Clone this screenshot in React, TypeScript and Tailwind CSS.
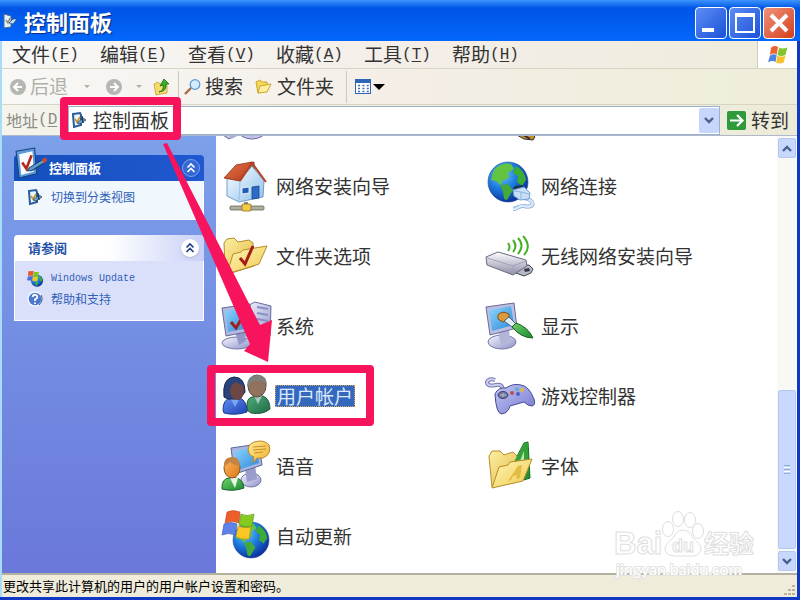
import type { ReactNode } from "react";

interface IconProps {
  children: ReactNode;
  className?: string;
  box?: string;
}

const Svg = ({ children, className = "size-12", box = "0 0 48 48" }: IconProps) => (
  <svg viewBox={box} className={`shrink-0 overflow-visible ${className}`} aria-hidden="true">
    {children}
  </svg>
);

const Gradient = ({ id, from, to, x2 = "1", y2 = "1" }: { id: string; from: string; to: string; x2?: string; y2?: string }) => (
  <linearGradient id={id} x1="0" y1="0" x2={x2} y2={y2}>
    <stop offset="0" stopColor={from} />
    <stop offset="1" stopColor={to} />
  </linearGradient>
);

// Gradients shared by all icons
const SharedDefs = () => (
  <svg className="absolute size-0" aria-hidden="true">
    <defs>
      <Gradient id="folder" from="#fff6b8" to="#f0c94e" />
      <Gradient id="folderBack" from="#fdf0a4" to="#e3b640" />
      <Gradient id="screen" from="#8fd8fb" to="#2b86dc" />
      <Gradient id="shell" from="#f4f4ff" to="#8f92c8" />
      <Gradient id="roof" from="#e8744a" to="#b33c1c" />
      <Gradient id="wall" from="#ffffff" to="#8cc0ec" />
      <Gradient id="blueShirt" from="#5f8cf2" to="#1c42b4" />
      <Gradient id="greenShirt" from="#4fae78" to="#1d6a44" />
      <Gradient id="greenBody" from="#6fd06c" to="#188a2c" />
      <Gradient id="orange" from="#ffb45c" to="#d97a18" />
      <Gradient id="bubble" from="#ffec94" to="#f0b02c" />
      <Gradient id="pad" from="#c4c8f8" to="#7478cc" />
      <Gradient id="device" from="#ffffff" to="#8c8ca8" x2="0" />
      <radialGradient id="globe" cx="0.35" cy="0.3" r="0.75">
        <stop offset="0" stopColor="#6cc8f8" />
        <stop offset="0.5" stopColor="#1c7ade" />
        <stop offset="1" stopColor="#0a2c98" />
      </radialGradient>
    </defs>
  </svg>
);

const WindowsFlag = ({ className = "size-12" }: { className?: string }) => (
  <Svg className={className} box="0 0 32 28">
    <path d="M5 2 Q11 -2 16 1 L14 13 Q9 10 3 14Z" fill="#ee6230" />
    <path d="M18 2 Q23 5 31 2 L28 14 Q21 17 15 14Z" fill="#82c430" />
    <path d="M3 15 Q9 11 14 14 L12 25 Q6 22 0 26Z" fill="#4e84e4" />
    <path d="M15 15 Q21 18 28 15 L25 26 Q19 29 13 26Z" fill="#fac02c" />
  </Svg>
);

const PanelIcon = ({ className }: { className: string }) => (
  <Svg className={className} box="0 0 32 32">
    <path d="M2 5 L20 2 L22 27 L5 31Z" fill="#5d9ad8" stroke="#174178" />
    <path d="M5 8 L18 5 L19 25 L7 28Z" fill="#f8fcff" />
    <path d="M8 16 L12 22 L17 9" fill="none" stroke="#b82418" strokeWidth="2.5" />
    <path d="M15 21 L28 13 L30 16 L17 24 L13 24Z" fill="#5e9cce" stroke="#1d3f6a" />
    <path d="M27 13 L31 11 L32 14 L29 17Z" fill="#d6472c" />
  </Svg>
);

const TaskIcon = ({ className }: { className: string }) => (
  <Svg className={className} box="0 0 16 16">
    <path d="M2 2 L9 1 L10 3 L10 13 L3 15Z" fill="#e8f4ff" stroke="#285c9c" strokeWidth="2" />
    <path d="M4 7 L6 10 L9 5" fill="none" stroke="#c89428" strokeWidth="1.5" />
    <path d="M6 11 L12 6 L15 8 L9 12Z" fill="#6ea6d4" stroke="#1c3450" strokeWidth="0.7" />
    <path d="M11 4 L12 11" stroke="#1c3450" strokeWidth="1.4" />
  </Svg>
);

const TitleIcon = () => (
  <Svg className="h-4 w-[14px]" box="0 0 14 16">
    <path d="M0 1 L7 3 L7 14 L0 15Z" fill="#e4f0fa" stroke="#4c6c94" />
    <path d="M2 7 L4 10 L6 5" fill="none" stroke="#8c8c6c" strokeWidth="1.4" />
    <path d="M5 10 L9 6 L13 6 L9 11Z" fill="#c4dcf0" stroke="#28507c" strokeWidth="0.7" />
  </Svg>
);

const HouseIcon = () => (
  <Svg>
    <path d="M28 1 L33 0 L34 12 L28 6Z" fill="#c2452c" stroke="#842818" strokeWidth="0.7" />
    <path d="M6 16 L20 17 L31 4 L43 19 L42 35 L18 40 L6 34Z" fill="url(#wall)" stroke="#5b86bc" strokeWidth="0.8" />
    <path d="M19 18 L18 40" stroke="#9cc2e6" />
    <path d="M3 16 L15 3 L31 0 L19 19Z" fill="url(#roof)" stroke="#8c2c18" strokeWidth="0.8" />
    <path d="M19 19 L31 1 L45 20" fill="none" stroke="#b34426" strokeWidth="2" />
    <path d="M21 26 L28 25 L28 31 L21 32Z" fill="#1c5cba" stroke="#fff" strokeWidth="0.8" />
    <path d="M31 25 L38 24 L38 36 L31 37Z" fill="#2c6cc6" stroke="#174790" strokeWidth="0.8" />
    <path d="M25 40 L25 45" stroke="#8c8c7c" strokeWidth="4" />
    <rect x="9" y="44" width="34" height="4" rx="1" fill="#b0b09c" stroke="#66665a" strokeWidth="0.8" />
    <rect x="21" y="42" width="9" height="7" rx="1" fill="#f3c94c" stroke="#8c6c1c" strokeWidth="0.8" />
  </Svg>
);

const Globe = ({ cx, cy, r }: { cx: number; cy: number; r: number }) => (
  <g transform={`translate(${cx} ${cy}) scale(${r / 20})`}>
    <circle r="20" fill="url(#globe)" stroke="#1b4898" strokeWidth="0.6" />
    <path d="M-14 -12 Q-6 -20 3 -18 L6 -13 L0 -9 L1 -4 L-5 -2 L-7 3 L-12 -1 L-17 -2Z" fill="#62c440" />
    <path d="M-8 3 L0 2 L5 8 L-1 18 L-4 17 L-5 10Z" fill="#44a83c" />
    <path d="M8 -16 Q17 -11 18 -2 L14 4 L9 0 L10 -6 L5 -9Z" fill="#3cac34" />
  </g>
);

const NetworkIcon = () => (
  <Svg>
    <Globe cx={22} cy={20} r={20} />
    <path d="M27 27 L29 24 L37 23 L38 26 L31 30Z" fill="#16324c" />
    <path d="M38 36 C50 38 49 47 38 44 C33 43 32 47 27 47" fill="none" stroke="#7fa4d0" strokeWidth="4" />
    <path d="M38 36 C50 38 49 47 38 44 C33 43 32 47 27 47" fill="none" stroke="#d8eafc" strokeWidth="2.6" />
    <path d="M27 28 L38 25 L44 31 L43 37 L34 38 L28 34Z" fill="#c7e0f8" stroke="#6f9ccc" />
    <path d="M28 29 L35 30 L43 32 M35 30 L35 37" fill="none" stroke="#8cb4dc" />
  </Svg>
);

const FolderCheckIcon = () => (
  <Svg>
    <path d="M3 11 L6 7 L13 6 L17 10 L28 8 L32 11 L33 34 L7 42 L4 36Z" fill="url(#folderBack)" stroke="#b48c28" />
    <path d="M12 22 L20 20 L22 18 L46 14 L38 32 L6 42Z" fill="url(#folder)" stroke="#b48c28" />
    <path d="M19 26 L24 32 L32 14" fill="none" stroke="#a41c14" strokeWidth="3" />
  </Svg>
);

const WirelessIcon = () => (
  <Svg>
    <g fill="none" stroke="#48b028" strokeWidth="2">
      <path d="M22 11 Q25 15 22 19" />
      <path d="M27 8 Q32 14 27 20" />
      <path d="M32 6 Q39 13 32 22" />
      <path d="M37 4 Q46 14 38 23" />
    </g>
    <path d="M31 34 L43 33 L47 37 L45 41 L38 44 L30 41Z" fill="#b7bac6" stroke="#424454" />
    <path d="M38 37 L43 36 L44 39 L39 40Z" fill="#343648" />
    <path d="M0 25 L12 20 L40 28 L41 34 L27 43 L1 33Z" fill="url(#device)" stroke="#6b6b80" />
    <path d="M1 26 L27 34 L40 29 M27 34 L27 42" fill="none" stroke="#a2a2b8" />
  </Svg>
);

const SystemIcon = () => (
  <Svg>
    <path d="M26 4 L34 0 L50 4 L49 34 L42 39 L25 34Z" fill="url(#shell)" stroke="#696ca0" />
    <path d="M36 5 L47 7 M36 11 L47 13 M36 17 L47 19" stroke="#8b90c4" strokeWidth="2" />
    <ellipse cx="16" cy="41" rx="15" ry="6" fill="url(#shell)" stroke="#7376a4" />
    <path d="M14 30 L24 30 L25 39 L18 43Z" fill="#9396c8" />
    <path d="M1 6 L29 2 L31 29 L5 34Z" fill="#b3b7de" stroke="#656a9e" />
    <path d="M4 9 L27 5 L28 26 L7 30Z" fill="url(#screen)" />
    <path d="M10 20 L15 26 L24 11" fill="none" stroke="#a02018" strokeWidth="3" />
  </Svg>
);

const DisplayIcon = () => (
  <Svg>
    <ellipse cx="16" cy="40" rx="14" ry="7" fill="url(#shell)" stroke="#7779a8" />
    <path d="M12 29 L23 26 L24 39 L15 43Z" fill="#b3b5d8" />
    <path d="M0 5 L28 1 L31 26 L4 33Z" fill="#bcbedf" stroke="#686b9b" />
    <path d="M3 8 L25 4 L28 23 L6 29Z" fill="url(#screen)" />
    <path d="M12 13 Q16 8 23 12 L23 17 L17 20 L12 17Z" fill="#dc9a3c" stroke="#845218" />
    <path d="M18 19 L23 15 L30 22 L26 25Z" fill="#e2ecf6" stroke="#4c6078" />
    <path d="M26 25 L30 21 Q42 25 47 36 Q35 36 26 25Z" fill="url(#greenBody)" stroke="#145c18" />
  </Svg>
);

const UsersIcon = () => (
  <Svg>
    <path d="M26 38 Q25 26 31 25 L42 24 Q49 27 49 37 Q42 43 30 41Z" fill="url(#greenShirt)" stroke="#205a40" />
    <path d="M33 24 L37 32 L41 24Z" fill="#a8c8c0" />
    <ellipse cx="36" cy="14" rx="9" ry="11" fill="#91725e" stroke="#5c5148" />
    <path d="M26 14 Q26 3 37 3 Q46 3 46 14 Q44 8 37 9 Q30 8 28 14Z" fill="#7c827c" />
    <path d="M2 38 Q2 27 10 26 L19 26 Q26 29 26 40 Q14 44 3 41Z" fill="url(#blueShirt)" stroke="#203c84" />
    <path d="M9 26 L14 35 L19 26Z" fill="#7ca4f0" />
    <path d="M3 25 Q1 6 13 5 Q24 5 24 20 L19 27 L7 27Z" fill="#29447c" stroke="#182444" />
    <ellipse cx="16" cy="19" rx="7" ry="9" fill="#6c4744" />
    <path d="M7 15 Q12 13 15 9 Q18 13 23 13 Q21 6 14 6 Q8 7 7 15Z" fill="#29447c" />
  </Svg>
);

const GamepadIcon = () => (
  <Svg>
    <path d="M17 18 Q17 12 10 13 Q1 15 1 10 Q3 6 9 8" fill="none" stroke="#7477ac" strokeWidth="4" />
    <path d="M17 18 Q17 12 10 13 Q1 15 1 10 Q3 6 9 8" fill="none" stroke="#cbcdf2" strokeWidth="2" />
    <path d="M9 22 Q12 15 20 16 Q27 11 35 13 Q43 14 48 27 Q50 33 46 34 Q42 34 38 30 L24 34 Q22 41 16 42 Q10 42 9 22Z" fill="url(#pad)" stroke="#484c94" />
    <ellipse cx="17" cy="23" rx="5" ry="3.5" fill="#73779c" stroke="#3c406c" />
    <path d="M14 23 L20 23 M17 21 L17 25" stroke="#b4b8d4" />
    <circle cx="26" cy="21" r="2" fill="#c2504c" />
    <circle cx="31" cy="17" r="2" fill="#5cb4c8" />
    <circle cx="36" cy="18" r="2" fill="#e0b848" />
    <circle cx="32" cy="22" r="2" fill="#4c60c8" />
  </Svg>
);

const VoiceIcon = () => (
  <Svg>
    <ellipse cx="30" cy="38" rx="10" ry="7" fill="url(#shell)" stroke="#7476a6" />
    <path d="M24 26 L34 23 L36 37 L26 40Z" fill="#9a9dcc" />
    <path d="M10 6 L38 2 L41 23 L17 31 L13 29Z" fill="#aab4dc" stroke="#59699c" />
    <path d="M13 9 L36 5 L38 21 L17 28Z" fill="url(#screen)" />
    <path d="M28 11 Q25 3 33 0 Q43 -3 48 3 Q51 12 42 16 L36 16 L32 21 L33 15 Q29 14 28 11Z" fill="url(#bubble)" stroke="#bd842c" />
    <path d="M32 5 L45 4 M32 8 L45 7 M33 11 L42 10" stroke="#c78d30" />
    <path d="M1 45 Q1 37 8 36 L15 36 Q22 37 23 46 Q12 50 1 47Z" fill="url(#greenBody)" stroke="#17642c" />
    <path d="M9 36 L14 46 L17 36Z" fill="#e5f8e8" />
    <ellipse cx="11" cy="26" rx="8" ry="10" fill="url(#orange)" stroke="#8c5420" />
    <path d="M3 25 Q2 15 11 15 Q19 15 19 24 Q12 23 9 20 Q6 22 3 25Z" fill="#c48444" />
  </Svg>
);

const FontsIcon = () => (
  <Svg>
    <path d="M25 26 L38 1 L42 0 L44 36 L38 38Z" fill="url(#greenBody)" stroke="#136c1c" />
    <path d="M3 14 L6 9 L14 9 L18 13 L27 10 L31 14 L34 38 L6 45Z" fill="url(#folderBack)" stroke="#b48c28" />
    <path d="M27 22 L37 2 L42 1 L42 23Z" fill="#33a038" />
    <path d="M34 19 L38 9 L38 20Z" fill="#c4e4b8" />
    <path d="M13 25 L22 23 L24 20 L46 17 L37 39 L6 46Z" fill="url(#folder)" stroke="#b48c28" />
    <path d="M22 39 L32 24 L36 23 L34 36 L30 37 L31 33 L27 34 L25 38Z" fill="#e2bb42" />
  </Svg>
);

const UpdateIcon = () => (
  <Svg>
    <Globe cx={30} cy={28} r={18} />
    <path d="M6 0 Q12 -3 19 0 L18 11 Q11 8 4 11Z" fill="#ee5e2a" stroke="#ba4420" strokeWidth="0.6" />
    <path d="M20 2 Q26 5 33 2 L31 14 Q25 16 18 13Z" fill="#86cc20" stroke="#508c18" strokeWidth="0.6" />
    <path d="M3 12 Q10 9 16 12 L14 23 Q8 20 1 23Z" fill="#5d83ea" stroke="#3454b0" strokeWidth="0.6" />
    <path d="M17 14 Q23 17 30 15 L28 27 Q22 28 15 25Z" fill="#fac824" stroke="#b48a14" strokeWidth="0.6" />
  </Svg>
);

// Items scrolled mostly out of view at the top of the list
const ScannerIcon = () => (
  <Svg>
    <path d="M3 38 L14 42 L8 47 L2 43Z" fill="#c6cae4" stroke="#5c6288" />
    <ellipse cx="31" cy="38" rx="14" ry="9" fill="#c5c4ec" stroke="#67689a" />
    <path d="M9 46 L25 38 L32 44" fill="none" stroke="#a8acd0" strokeWidth="3" />
  </Svg>
);

const PenIcon = () => (
  <Svg>
    <path d="M22 38 L45 41 L49 45 L47 48 L38 47Z" fill="#c68c34" stroke="#34302c" />
    <path d="M36 42 L44 47" stroke="#34302c" strokeWidth="2" />
  </Svg>
);

const items = [
  { icon: <ScannerIcon /> },
  { icon: <PenIcon /> },
  { icon: <HouseIcon />, label: "网络安装向导" },
  { icon: <NetworkIcon />, label: "网络连接" },
  { icon: <FolderCheckIcon />, label: "文件夹选项" },
  { icon: <WirelessIcon />, label: "无线网络安装向导" },
  { icon: <SystemIcon />, label: "系统" },
  { icon: <DisplayIcon />, label: "显示" },
  { icon: <UsersIcon />, label: "用户帐户", selected: true },
  { icon: <GamepadIcon />, label: "游戏控制器" },
  { icon: <VoiceIcon />, label: "语音" },
  { icon: <FontsIcon />, label: "字体" },
  { icon: <UpdateIcon />, label: "自动更新" },
];

const menus = [
  { label: "文件", hotkey: "F" },
  { label: "编辑", hotkey: "E" },
  { label: "查看", hotkey: "V" },
  { label: "收藏", hotkey: "A" },
  { label: "工具", hotkey: "T" },
  { label: "帮助", hotkey: "H" },
];

const Hotkey = ({ letter }: { letter: string }) => (
  <span className="font-['Liberation_Mono',monospace] text-[16px]">
    (<span className="underline underline-offset-2">{letter}</span>)
  </span>
);

const TitleBar = () => (
  <header className="flex h-[41px] shrink-0 items-center bg-linear-to-b from-[#3c94fc] via-[#0054e6] via-20% to-[#0468fc] pr-[5px] pl-1">
    <TitleIcon />
    <h1 className="ml-[6px] flex-1 text-[22px] leading-8 font-bold text-white [text-shadow:1px_1px_1px_#0a2c80]">控制面板</h1>
    <div className="flex gap-[2px] pt-1">
      <button aria-label="最小化" className="flex size-8 items-end justify-start rounded-[4px] border border-white bg-linear-to-br from-[#5c8cf4] to-[#1c50d8] p-[6px]">
        <span className="h-1 w-3 bg-white" />
      </button>
      <button aria-label="最大化" className="flex size-8 items-center justify-center rounded-[4px] border border-white bg-linear-to-br from-[#5c8cf4] to-[#1c50d8]">
        <span className="size-5 border-2 border-t-4 border-white" />
      </button>
      <button aria-label="关闭" className="flex size-8 items-center justify-center rounded-[4px] border border-white bg-linear-to-br from-[#f0917a] to-[#d23c14]">
        <Svg className="size-5" box="0 0 20 20">
          <path d="M2 2 L18 18 M18 2 L2 18" stroke="#fff" strokeWidth="4" />
        </Svg>
      </button>
    </div>
  </header>
);

const MenuBar = () => (
  <nav className="flex h-7 shrink-0 border-b border-[#d8d4c4] bg-linear-to-r from-[#f8f8f6] via-[#f4eee8] to-[#eeecdc] pl-[10px]">
    <div className="flex flex-1 gap-5">
      {menus.map((menu) => (
        <button key={menu.hotkey} className="flex w-[68px] items-center text-[19px] whitespace-nowrap text-[#333]">
          {menu.label}
          <Hotkey letter={menu.hotkey} />
        </button>
      ))}
    </div>
    <div className="flex w-10 items-center justify-center border-l border-[#d0ccbc] bg-white">
      <WindowsFlag className="h-[18px] w-5" />
    </div>
  </nav>
);

const RoundArrow = ({ back }: { back?: boolean }) => (
  <Svg className="size-4" box="0 0 16 16">
    <circle cx="8" cy="8" r="8" fill="#b6b6b2" />
    {back ? (
      <path d="M12 8 H5 M8 4 L4 8 L8 12" fill="none" stroke="#fff" strokeWidth="2" />
    ) : (
      <path d="M4 8 H11 M8 4 L12 8 L8 12" fill="none" stroke="#fff" strokeWidth="2" />
    )}
  </Svg>
);

const Caret = ({ className }: { className: string }) => (
  <Svg className={className} box="0 0 12 6">
    <path d="M0 0 H12 L6 6Z" fill="currentColor" />
  </Svg>
);

const Toolbar = () => (
  <div className="flex h-9 shrink-0 items-center border-b border-[#d8d4c4] bg-linear-to-r from-[#f8f8f6] via-[#f4eee6] to-[#eeedd9] pl-2 text-[19px] text-[#333]">
    <button disabled className="flex items-center gap-1 text-[#b0b0aa]">
      <RoundArrow back />
      后退
      <Caret className="ml-3 h-[3px] w-[6px]" />
    </button>
    <button disabled className="ml-4 flex items-center gap-[14px] text-[#b0b0aa]">
      <RoundArrow />
      <Caret className="h-[3px] w-[6px]" />
    </button>
    <button aria-label="向上" className="ml-3">
      <Svg className="size-4" box="0 0 16 16">
        <path d="M0 5 L4 3 L6 5 L13 4 L13 14 L2 16Z" fill="#f4dc6c" stroke="#c8a034" strokeWidth="0.8" />
        <path d="M5 13 Q10 12 9 6 L6 7 L10 0 L15 5 L12 5 Q13 12 5 13Z" fill="#38b028" stroke="#186c14" strokeWidth="0.8" />
      </Svg>
    </button>
    <span className="ml-2 h-8 w-px bg-[#cfcab8]" />
    <button className="ml-[6px] flex items-center gap-1">
      <Svg className="size-4" box="0 0 16 16">
        <path d="M0 15 L6 9" stroke="#a86c4c" strokeWidth="2.4" />
        <circle cx="10" cy="5.5" r="4.8" fill="#d4ecff" stroke="#6496d0" strokeWidth="1.3" />
      </Svg>
      搜索
    </button>
    <button className="ml-3 flex items-center gap-[6px]">
      <Svg className="h-[14px] w-4" box="0 0 16 14">
        <path d="M1 2 L5 0 L7 2 L12 2 L13 10 L3 13Z" fill="#f6d858" stroke="#d0a42c" />
        <path d="M5 6 L16 4 L12 12 L3 13Z" fill="#fdf0a0" stroke="#d0a42c" />
      </Svg>
      文件夹
    </button>
    <span className="ml-3 h-8 w-px bg-[#cfcab8]" />
    <button aria-label="查看方式" className="ml-2 flex items-center gap-[2px] text-black">
      <Svg className="h-[15px] w-4" box="0 0 16 15">
        <rect x="0.5" y="0.5" width="15" height="14" fill="#fff" stroke="#2d66b8" />
        <rect width="16" height="4" fill="#2d66b8" />
        <path d="M3 6.5 H14 M3 9.5 H14 M3 12.5 H14" stroke="#3f70a4" strokeWidth="1.6" strokeDasharray="2 2.4" />
      </Svg>
      <Caret className="h-[6px] w-3" />
    </button>
  </div>
);

const Chevron = ({ up }: { up?: boolean }) => (
  <Svg className="h-[7px] w-[10px]" box="0 0 10 7">
    <path d={up ? "M1 6 L5 2 L9 6" : "M1 1 L5 5 L9 1"} fill="none" stroke="#48608c" strokeWidth="2.4" />
  </Svg>
);

const AddressBar = () => (
  <div className="flex h-[30px] shrink-0 items-center bg-linear-to-r from-[#f4f3ec] to-[#edebd8] pl-1">
    <label htmlFor="address" className="flex w-[62px] items-center text-[16px] whitespace-nowrap text-[#8c8c86]">
      地址
      <Hotkey letter="D" />
    </label>
    <div className="flex h-[29px] min-w-0 flex-1 items-center border border-[#9cb0cc] bg-white pl-[2px]">
      <TaskIcon className="size-4" />
      <input id="address" defaultValue="控制面板" className="ml-[6px] min-w-0 flex-1 text-[19px] leading-6 text-[#333] outline-none" />
      <button aria-label="展开" className="flex h-[25px] w-5 items-center justify-center rounded-[2px] bg-[#c6d6fc]">
        <Chevron />
      </button>
    </div>
    <button className="mr-2 ml-[7px] flex items-center gap-[5px] text-[19px] text-[#333]">
      <Svg className="size-[19px]" box="0 0 19 19">
        <rect width="19" height="19" rx="2" fill="#2e9a3c" />
        <path d="M3 9.5 H15 M10 4 L15.5 9.5 L10 15" fill="none" stroke="#fff" strokeWidth="2.2" />
      </Svg>
      转到
    </button>
  </div>
);

const Collapse = ({ className }: { className: string }) => (
  <button aria-label="折叠" className={`flex size-[18px] items-center justify-center rounded-full ${className}`}>
    <Svg className="size-[10px]" box="0 0 10 10">
      <path d="M1.5 4.5 L5 1 L8.5 4.5 M1.5 9 L5 5.5 L8.5 9" fill="none" stroke="currentColor" strokeWidth="1.6" />
    </Svg>
  </button>
);

const Sidebar = () => (
  <aside className="flex w-[214px] shrink-0 flex-col gap-[15px] bg-linear-to-b from-[#7ca0ea] to-[#6a78da] px-3 pt-[19px] text-[12px]">
    <section>
      <div className="flex h-[26px] items-center rounded-t-[4px] bg-linear-to-r from-[#1450bc] to-[#2058d0] pr-1">
        <PanelIcon className="-mt-3 size-[33px]" />
        <h2 className="ml-[2px] flex-1 text-[13px] font-bold text-white">控制面板</h2>
        <Collapse className="border border-[#7ca0ea] bg-[#3468d4] text-white" />
      </div>
      <div className="h-[39px] border border-t-0 border-white bg-[#f0f8fe] px-3 pt-2">
        <a href="#category" className="flex items-center gap-2 leading-4 text-[#3060b8]">
          <TaskIcon className="size-4" />
          切换到分类视图
        </a>
      </div>
    </section>
    <section>
      <div className="flex h-[26px] items-center rounded-t-[4px] bg-linear-to-r from-white from-50% to-[#c8d0f6] pr-[5px] pl-[14px]">
        <h2 className="flex-1 text-[13px] font-bold text-[#2450a8]">请参阅</h2>
        <Collapse className="bg-white text-[#1c3c80] shadow" />
      </div>
      <div className="flex h-[60px] flex-col gap-1 border border-t-0 border-white bg-[#dbe0fa] px-3 pt-[10px] text-[#3060b8]">
        <a href="#update" className="flex items-center gap-2 font-['Liberation_Mono',monospace] text-[10px] leading-4">
          <Svg className="size-4">
            <Globe cx={30} cy={29} r={18} />
            <path d="M4 1 L20 0 L18 14 L3 14Z" fill="#e85828" />
            <path d="M21 3 L36 3 L33 16 L19 15Z" fill="#80c424" />
            <path d="M3 16 L17 16 L15 29 L0 28Z" fill="#4870d8" />
            <path d="M18 17 L33 18 L30 31 L16 29Z" fill="#f4c428" />
          </Svg>
          Windows Update
        </a>
        <a href="#help" className="flex items-center gap-2 leading-4">
          <Svg className="size-4" box="0 0 16 16">
            <circle cx="8" cy="8" r="7" fill="#4a78d0" stroke="#f4f8ff" strokeWidth="1.5" />
            <path d="M14 4 Q17 9 12 14" fill="none" stroke="#28488c" />
            <path d="M5.5 6 Q6 3.500 8.500 3.800 Q11 4.500 10 7 L8 8.500 L8 10 M8 11.500 L8 13" fill="none" stroke="#fff" strokeWidth="1.8" />
          </Svg>
          帮助和支持
        </a>
      </div>
    </section>
  </aside>
);

const ItemList = () => (
  <main className="flex min-w-0 flex-1 flex-col justify-end overflow-hidden bg-white pb-[2px] pl-[5px]">
    <ul className="grid shrink-0 grid-cols-[repeat(auto-fill,265px)]">
      {items.map((item, index) => (
        <li key={index} className="flex h-[70px] items-center">
          <button className="flex items-center gap-[6px] text-[19px] text-[#333]">
            {item.icon}
            {item.label && (
              <span
                className={
                  item.selected
                    ? "border border-dotted border-[#d8a060] bg-[#3468bc] px-px leading-5 text-[#dce8fc]"
                    : "px-px leading-6"
                }
              >
                {item.label}
              </span>
            )}
          </button>
        </li>
      ))}
    </ul>
  </main>
);

const ScrollBar = () => (
  <div className="flex w-5 shrink-0 flex-col items-center gap-[2px] bg-[#f8f8f4] py-[2px]">
    <button aria-label="向上滚动" className="flex h-5 w-[18px] items-center justify-center rounded-[2px] border border-[#b4c8f4] bg-[#c8d8fc]">
      <Chevron up />
    </button>
    <div className="flex w-full flex-1 flex-col items-center justify-end">
      <div className="flex h-[41%] w-[18px] flex-col items-center justify-center gap-px rounded-[2px] border border-[#b4c8f4] bg-[#c8d8fe]">
        <span className="h-px w-[6px] bg-[#8cb0d8]" />
        <span className="h-px w-[6px] bg-white" />
        <span className="h-px w-[6px] bg-[#8cb0d8]" />
        <span className="h-px w-[6px] bg-white" />
        <span className="h-px w-[6px] bg-[#8cb0d8]" />
      </div>
    </div>
    <button aria-label="向下滚动" className="flex h-5 w-[18px] items-center justify-center rounded-[2px] border border-[#b4c8f4] bg-[#c8d8fc]">
      <Chevron />
    </button>
  </div>
);

const StatusBar = () => (
  <footer className="flex h-6 shrink-0 items-center justify-between border-t-2 border-[#b4b0a0] bg-[#efecdc] pl-px text-[13px] leading-5 text-black">
    <p>更改共享此计算机的用户的用户帐户设置和密码。</p>
    <Svg className="mt-2 mr-px size-3" box="0 0 12 12">
      <path d="M8 1h3v2h-3z M4 5h3v2h-3z M8 5h3v2h-3z M0 9h3v2h-3z M4 9h3v2h-3z M8 9h3v2h-3z" fill="#b8b49c" />
    </Svg>
  </footer>
);

const Annotations = () => (
  <svg className="pointer-events-none absolute top-0 left-0 h-[600px] w-[800px]" aria-hidden="true">
    <g fill="none" stroke="#f8145c" strokeWidth="8" strokeLinejoin="round">
      <rect x="64" y="101" width="113" height="35" />
      <rect x="211" y="369" width="159" height="53" />
    </g>
    <path d="M163 144 L167 143 L260 325 L272 320 L268 362 L244 351 L250 344Z" fill="#f8145c" />
  </svg>
);

const Watermark = () => (
  <svg viewBox="0 0 148 72" className="pointer-events-none absolute right-[38px] bottom-[14px] h-[72px] w-[148px]" aria-hidden="true">
    <g fill="#fff" stroke="#dedede">
      <ellipse cx="54" cy="18" rx="5.5" ry="7.5" />
      <ellipse cx="64" cy="8" rx="5.5" ry="7.5" />
      <ellipse cx="76" cy="9" rx="5.5" ry="7.5" />
      <ellipse cx="84" cy="20" rx="5.5" ry="7.5" />
      <path d="M69 19 Q76 19 79 27 Q88 34 87 39 Q84 46 76 45 L61 45 Q51 45 51 37 Q52 32 59 27 Q63 19 69 19Z" />
      <g className="font-['Noto_Sans_CJK_SC',sans-serif] font-bold">
        <text x="0" y="43" fontSize="31" fontFamily="Liberation Sans">Bai</text>
        <text x="58" y="41" fontSize="18" fontFamily="Liberation Sans">du</text>
        <text x="90" y="42" fontSize="25">经验</text>
      </g>
    </g>
    <text x="2" y="64" fontSize="16" fill="#fff" stroke="#e2e2de" strokeWidth="2" paintOrder="stroke" fontFamily="Lato, sans-serif">
      jingyan.baidu.com
    </text>
  </svg>
);

export default function App() {
  return (
    <div className="relative flex h-screen w-full flex-col overflow-hidden border-b-[3px] border-[#1038c4] bg-[#efecdc] font-['Noto_Sans_CJK_SC',sans-serif]">
      <SharedDefs />
      <TitleBar />
      <div className="flex min-h-0 flex-1 flex-col border-r-[3px] border-l-2 border-r-[#1038c4] border-l-[#a8dcf8]">
        <MenuBar />
        <Toolbar />
        <AddressBar />
        <div className="flex min-h-0 flex-1 border-t border-[#b0b8cc]">
          <Sidebar />
          <ItemList />
          <ScrollBar />
        </div>
        <StatusBar />
      </div>
      <Annotations />
      <Watermark />
    </div>
  );
}
